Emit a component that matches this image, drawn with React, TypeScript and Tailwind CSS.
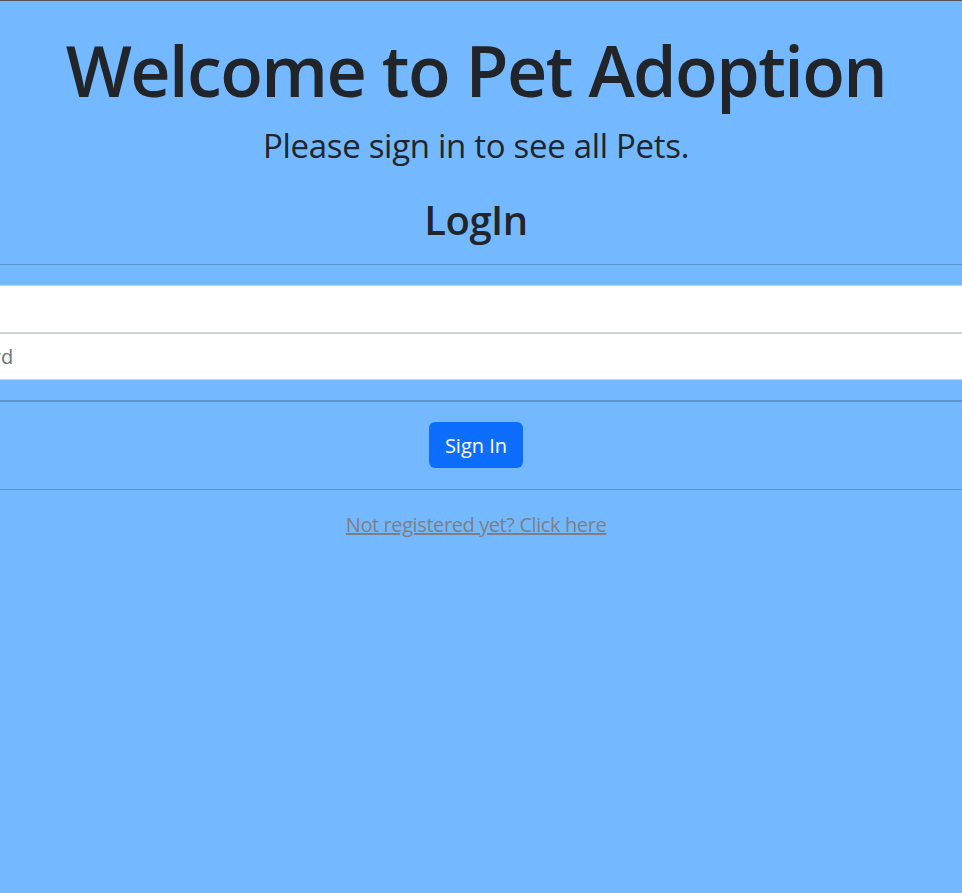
export default function App() {
  return (
    <div
      className="min-h-[893px] w-full overflow-hidden border-t border-[#555555] bg-[#74b9ff] text-[#212529]"
      style={{ fontFamily: '"Open Sans", "Noto Sans", sans-serif' }}
    >
      <div className="w-[952px] text-center">
        {/* Header */}
        <h1 className="mt-[27px] text-[70px] font-semibold leading-[84px] tracking-[-1.6px]">
          Welcome to Pet Adoption
        </h1>
        <p className="mt-[10px] text-[33px] leading-[48px] tracking-[-0.3px]">
          Please sign in to see all Pets.
        </p>
        <h2 className="mt-[26px] text-[40px] font-semibold leading-[48px] tracking-[-0.5px]">
          LogIn
        </h2>
      </div>

      <hr className="mt-[20px] border-t border-[#5f94c9]" />

      {/* Form */}
      <form className="mt-[20px]">
        <div className="flex flex-col">
          <input
            type="email"
            placeholder="Email"
            className="-ml-[90px] h-[48px] w-[1200px] border border-[#ced4da] bg-white px-[12px] text-[20px] text-[#212529] placeholder:text-[#6c757d] outline-none"
          />
          <input
            type="password"
            placeholder="Password"
            className="-ml-[90px] h-[47px] w-[1200px] border border-[#ced4da] bg-white px-[12px] text-[20px] text-[#212529] placeholder:text-[#6c757d] outline-none"
          />
        </div>
        <hr className="mt-[20px] border-t-2 border-[#5f94c9]" />
        <div className="flex w-[952px] justify-center pt-[20px] pb-[21px]">
          <button
            type="button"
            className="h-[46px] w-[94px] rounded-[6px] bg-[#0d6efd] pt-[1px] text-[20px] text-white"
          >
            Sign In
          </button>
        </div>
        <hr className="border-t border-[#5f94c9]" />
      </form>

      <div className="w-[952px] pt-[20px] text-center leading-[30px]">
        <a href="#" className="text-[20px] tracking-[-0.4px] text-[#7f7f7f] underline">
          Not registered yet? Click here
        </a>
      </div>
    </div>
  );
}
